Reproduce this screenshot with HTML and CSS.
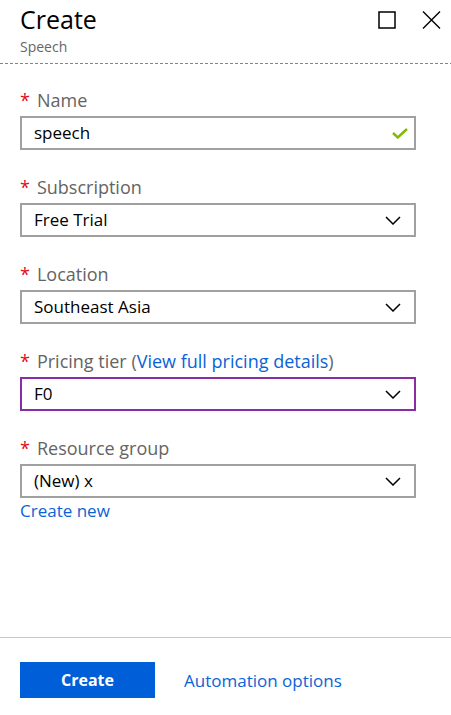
FILE: index.html
```html
<!DOCTYPE html>
<html lang="en">
<head>
<meta charset="utf-8">
<title>Create - Speech</title>
<link rel="stylesheet" href="styles.css">
</head>
<body>
<div class="blade">
  <header class="blade-header">
    <div class="titles">
      <h1 class="title">Create</h1>
      <div class="subtitle">Speech</div>
    </div>
    <div class="header-actions">
      <span class="icon-btn">
        <svg width="18" height="18" viewBox="0 0 18 18"><rect x="1" y="1" width="16" height="16" fill="none" stroke="#000" stroke-width="1.5"/></svg>
      </span>
      <span class="icon-btn">
        <svg width="19" height="18" viewBox="0 0 19 18"><path d="M1 0.5 L18 17.5 M18 0.5 L1 17.5" stroke="#000" stroke-width="1.4" fill="none"/></svg>
      </span>
    </div>
  </header>
  <div class="rule-top"></div>

  <main class="form">
    <div class="field">
      <div class="label"><span class="req">*</span>Name</div>
      <div class="box">
        <span class="value">speech</span>
        <svg class="check" width="16" height="11" viewBox="0 0 16 11"><path d="M1 5 L5.8 9.5 L15 1" stroke="#7fba00" stroke-width="2.4" fill="none"/></svg>
      </div>
    </div>
    <div class="field">
      <div class="label"><span class="req">*</span>Subscription</div>
      <div class="box">
        <span class="value">Free Trial</span>
        <svg class="chev" width="16" height="9" viewBox="0 0 16 9"><path d="M1 1 L8 8 L15 1" stroke="#000" stroke-width="1.5" fill="none"/></svg>
      </div>
    </div>
    <div class="field">
      <div class="label"><span class="req">*</span>Location</div>
      <div class="box">
        <span class="value">Southeast Asia</span>
        <svg class="chev" width="16" height="9" viewBox="0 0 16 9"><path d="M1 1 L8 8 L15 1" stroke="#000" stroke-width="1.5" fill="none"/></svg>
      </div>
    </div>
    <div class="field">
      <div class="label"><span class="req">*</span>Pricing tier (<a class="link" href="#">View full pricing details</a>)</div>
      <div class="box box-focus">
        <span class="value">F0</span>
        <svg class="chev" width="16" height="9" viewBox="0 0 16 9"><path d="M1 1 L8 8 L15 1" stroke="#000" stroke-width="1.5" fill="none"/></svg>
      </div>
    </div>
    <div class="field field-last">
      <div class="label"><span class="req">*</span>Resource group</div>
      <div class="box">
        <span class="value">(New) x</span>
        <svg class="chev" width="16" height="9" viewBox="0 0 16 9"><path d="M1 1 L8 8 L15 1" stroke="#000" stroke-width="1.5" fill="none"/></svg>
      </div>
      <a class="link create-new" href="#">Create new</a>
    </div>
  </main>

  <div class="rule-bottom"></div>
  <footer class="footer">
    <button class="primary">Create</button>
    <a class="link automation" href="#">Automation options</a>
  </footer>
</div>
</body>
</html>
```

FILE: styles.css
```css
html, body {
  margin: 0;
  padding: 0;
  background: #fff;
}
body {
  font-family: "Open Sans", "Noto Sans", "Liberation Sans", sans-serif;
  color: #000;
}
.blade {
  height: 715px;
  display: flex;
  flex-direction: column;
  overflow: hidden;
}
.blade-header {
  display: flex;
  justify-content: space-between;
  align-items: flex-start;
  padding: 4px 10px 8px 20px;
}
.title {
  margin: 0;
  font-size: 25px;
  line-height: 31px;
  font-weight: 400;
  color: #000;
}
.subtitle {
  margin-top: 3px;
  font-size: 14px;
  line-height: 17px;
  color: #666;
}
.header-actions {
  display: flex;
  gap: 25px;
  padding-top: 7px;
}
.icon-btn {
  display: block;
  width: 19px;
  height: 18px;
}
.icon-btn svg { display: block; }
.rule-top {
  height: 1px;
  background: repeating-linear-gradient(90deg, #00b4ef 0 3px, #ffffff 3px 5px);
}
.form {
  flex: 1;
  padding: 24px 35px 0 20px;
}
.field {
  margin-bottom: 25px;
}
.field-last { margin-bottom: 0; }
.label {
  font-size: 18px;
  line-height: 24px;
  color: #646464;
  margin-bottom: 4px;
  white-space: nowrap;
}
.req {
  color: #e00b1c;
  margin-right: 7px;
}
.link {
  color: #0a63d6;
  text-decoration: none;
}
.box {
  box-sizing: border-box;
  height: 34px;
  border: 2px solid #a0a0a0;
  display: flex;
  align-items: center;
  justify-content: space-between;
  padding: 0 13px 0 12px;
}
.box-focus {
  border-color: #8a2da5;
}
.value {
  font-size: 17px;
  line-height: 20px;
  color: #000;
}
.check { margin-right: -7px; display: block; }
.chev { display: block; }
.create-new {
  display: block;
  margin-top: 1px;
  font-size: 17px;
  line-height: 24px;
}
.rule-bottom {
  height: 1px;
  background: repeating-linear-gradient(90deg, #a8d2e4 0 3px, #c8c8c8 3px 5px);
}
.footer {
  display: flex;
  align-items: center;
  padding: 24px 20px 17px 20px;
  gap: 29px;
}
.primary {
  width: 135px;
  height: 36px;
  border: 0;
  background: #005ed8;
  color: #fff;
  font-family: inherit;
  font-size: 16px;
  font-weight: 700;
  padding: 0;
}
.automation {
  font-size: 17px;
}
```
